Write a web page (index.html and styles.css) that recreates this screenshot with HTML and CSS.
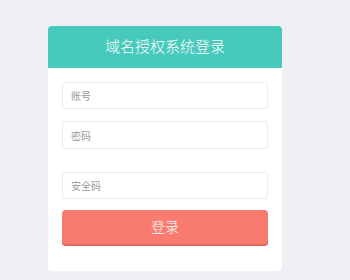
FILE: index.html
```html
<!DOCTYPE html>
<html lang="zh">
<head>
<meta charset="utf-8">
<title>域名授权系统登录</title>
<link rel="stylesheet" href="styles.css">
</head>
<body>
<div class="card">
  <div class="card-head">域名授权系统登录</div>
  <form class="card-body">
    <input class="field" type="text" placeholder="账号">
    <input class="field field-pass" type="password" placeholder="密码">
    <input class="field field-code" type="text" placeholder="安全码">
    <button class="btn" type="button">登录</button>
  </form>
</div>
</body>
</html>
```
FILE: styles.css
```css
html, body {
  margin: 0;
  padding: 0;
  background: #eff0f6;
  font-family: "Noto Sans CJK SC", "Noto Sans", sans-serif;
}
body {
  padding: 26px 0 0 48px;
}
.card {
  width: 234px;
  background: #fff;
  border-radius: 4px;
  overflow: hidden;
}
.card-head {
  height: 42px;
  line-height: 40px;
  background: #47cabc;
  color: #fff;
  text-align: center;
  font-size: 15px;
  font-weight: 300;
}
.card-body {
  display: flex;
  flex-direction: column;
  padding: 14px 14px 25px;
  margin: 0;
}
.field {
  box-sizing: border-box;
  height: 27px;
  margin: 0;
  padding: 0 8px;
  border: 1px solid #ececef;
  border-radius: 3px;
  background: #fff;
  font-family: inherit;
  font-size: 10px;
  color: #333;
  outline: none;
}
.field::placeholder {
  color: #9a9a9a;
}
.field-pass {
  margin-top: 12px;
  height: 28px;
}
.field-code {
  margin-top: 23px;
}
.btn {
  box-sizing: border-box;
  margin-top: 11px;
  height: 36px;
  border: 0;
  border-radius: 4px;
  background: #f77c6f;
  box-shadow: inset 0 -2px 0 #e56a5e;
  color: #fff;
  font-family: inherit;
  font-size: 14px;
  font-weight: 300;
  padding: 0 0 4px;
  cursor: pointer;
}
```
